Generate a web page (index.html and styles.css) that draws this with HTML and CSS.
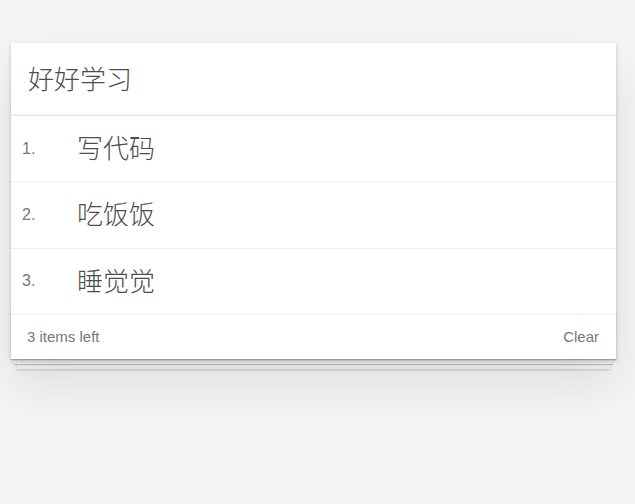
FILE: index.html
```html
<!DOCTYPE html>
<html lang="zh">
<head>
<meta charset="utf-8">
<link rel="stylesheet" href="styles.css">
</head>
<body>
<section class="todoapp">
  <header class="header">好好学习</header>
  <ol class="list">
    <li class="item"><span class="num">1.</span><span class="label">写代码</span></li>
    <li class="item"><span class="num">2.</span><span class="label">吃饭饭</span></li>
    <li class="item"><span class="num">3.</span><span class="label">睡觉觉</span></li>
  </ol>
  <footer class="footer">
    <span class="count">3 items left</span>
    <span class="clear">Clear</span>
  </footer>
</section>
</body>
</html>
```
FILE: styles.css
```css
html, body {
  margin: 0;
  padding: 0;
}
body {
  background: #f5f5f5;
  font-family: "Liberation Sans", Arial, "Noto Sans CJK SC", sans-serif;
  color: #4d4d4d;
  width: 635px;
  height: 504px;
  overflow: hidden;
}
.todoapp {
  background: #fff;
  margin: 43px 19px 0 11px;
  position: relative;
  box-shadow: 0 2px 4px rgba(0,0,0,0.2), 0 25px 50px 0 rgba(0,0,0,0.1);
}
.header {
  height: 72px;
  box-sizing: border-box;
  display: flex;
  align-items: center;
  padding-left: 17px;
  padding-bottom: 2px;
  font-size: 26px;
  line-height: 1;
  font-family: "Noto Sans CJK SC", sans-serif;
  font-weight: 300;
  color: #4d4d4d;
  border-bottom: 1px solid #e6e6e6;
  box-shadow: inset 0 -2px 1px rgba(0,0,0,0.03);
  height: 73px;
}
.list {
  list-style: none;
  margin: 0;
  padding: 0;
}
.item {
  height: 65.33px;
  display: flex;
  align-items: center;
  border-bottom: 1px solid #ededed;
}
.num {
  padding-left: 11px;
  font-size: 16px;
  color: #777;
  box-sizing: border-box;
  width: 66px;
}
.label {
  font-family: "Noto Sans CJK SC", sans-serif;
  font-weight: 300;
  font-size: 26px;
  line-height: 1;
  padding-bottom: 3px;
  color: #4d4d4d;
}
.footer {
  height: 44px;
  display: flex;
  align-items: center;
  justify-content: space-between;
  padding: 0 17px 0 16px;
  font-size: 15px;
  color: #777;
  position: relative;
}
.footer::before {
  content: "";
  position: absolute;
  left: 0;
  right: 0;
  bottom: 0;
  height: 50px;
  overflow: hidden;
  z-index: -1;
  box-shadow: 0 1px 1px rgba(0,0,0,0.2),
              0 8px 0 -3px #f6f6f6,
              0 9px 1px -3px rgba(0,0,0,0.2),
              0 16px 0 -6px #f6f6f6,
              0 17px 2px -6px rgba(0,0,0,0.2);
}
```
